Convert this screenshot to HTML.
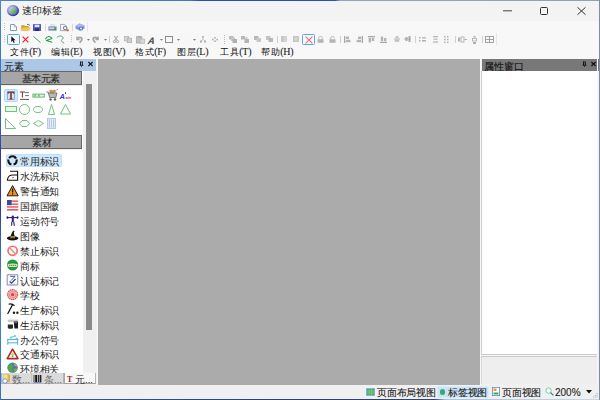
<!DOCTYPE html>
<html><head><meta charset="utf-8">
<style>
*{box-sizing:border-box;margin:0;padding:0}
html,body{width:600px;height:400px;overflow:hidden;background:#f0f0f0;font-family:"Liberation Sans",sans-serif;color:#000}
.a{position:absolute}
.t{position:absolute;white-space:nowrap;line-height:1}
.mn{font-size:9px;letter-spacing:0.6px;color:#111}
.mn .lt{font-family:"Liberation Serif",serif;font-weight:normal;font-size:10px;letter-spacing:-0.2px;color:#222;-webkit-text-stroke:0.1px #222}
.li{position:absolute;left:20px;font-size:9.5px;line-height:1;white-space:nowrap;color:#1a1a1a;letter-spacing:-0.2px;color:#222}
.sk{-webkit-text-stroke:0.1px currentColor}
svg{position:absolute;overflow:visible}
</style></head><body>
<!-- window border -->
<div class="a" style="left:0;top:0;width:600px;height:1px;background:linear-gradient(90deg,#4a86bd 0,#3b7cc0 190px,#2350c4 200px,#2a4cc0 335px,#93a6b6 340px,#8fa2b2 600px)"></div>


<!-- title bar -->
<div class="a" style="left:1px;top:1px;width:598px;height:20px;background:#f3f3f3"></div>
<svg style="left:7px;top:5px" width="12" height="12" viewBox="0 0 12 12">
<defs><radialGradient id="gb" cx="0.4" cy="0.4" r="0.6"><stop offset="0" stop-color="#e8ecf8"/><stop offset="0.6" stop-color="#8a90d8"/><stop offset="1" stop-color="#2a2ea0"/></radialGradient>
<linearGradient id="gg" x1="0" y1="0" x2="1" y2="1"><stop offset="0" stop-color="#c8d8c8"/><stop offset="1" stop-color="#3a9a4a"/></linearGradient></defs>
<ellipse cx="6" cy="5.6" rx="6" ry="5.6" fill="url(#gb)"/>
<rect x="3" y="2.2" width="6" height="6.6" rx="1" fill="url(#gg)"/>
</svg>
<div class="t" style="left:22px;top:6px;font-size:9.5px;color:#1a1a1a;letter-spacing:0px">速印标签</div>
<!-- window buttons -->
<svg style="left:503px;top:9px" width="9" height="4" viewBox="0 0 9 4"><path d="M0 1.8H9" stroke="#444" stroke-width="1"/></svg>
<div class="a" style="left:540px;top:7px;width:8px;height:8px;border:1px solid #333;border-radius:1.5px"></div>
<svg style="left:577px;top:7px" width="9" height="8" viewBox="0 0 9 8"><path d="M0.5 0.3L8.5 7.7M8.5 0.3L0.5 7.7" stroke="#333" stroke-width="1"/></svg>

<!-- toolbars -->
<div class="a" style="left:1px;top:21px;width:598px;height:38px;background:#f8f8f8"></div>
<div class="a" style="left:2px;top:22px;width:86px;height:10px;background:#f7f7f7;border-right:1px solid #e6e6e6"></div>
<div class="a" style="left:2px;top:33px;width:495px;height:12px;background:#f7f7f7;border-right:1px solid #e6e6e6"></div>
<!-- grips -->
<svg style="left:4px;top:23px" width="2" height="8"><rect x="0" y="0" width="1" height="1" fill="#c0c0c0"/><rect x="0" y="2" width="1" height="1" fill="#c0c0c0"/><rect x="0" y="4" width="1" height="1" fill="#c0c0c0"/><rect x="0" y="6" width="1" height="1" fill="#c0c0c0"/></svg>
<svg style="left:4px;top:35px" width="2" height="8"><rect x="0" y="0" width="1" height="1" fill="#c0c0c0"/><rect x="0" y="2" width="1" height="1" fill="#c0c0c0"/><rect x="0" y="4" width="1" height="1" fill="#c0c0c0"/><rect x="0" y="6" width="1" height="1" fill="#c0c0c0"/></svg>
<!-- row1 icons -->
<svg style="left:10px;top:24px" width="7" height="7" viewBox="0 0 7 7"><path d="M0.5 0.5H4.2L6.5 2.8V6.5H0.5Z" fill="#fbfcff" stroke="#7d8fb0" stroke-width="0.9"/><path d="M4.2 0.5V2.8H6.5" fill="#d8e0ee" stroke="#7d8fb0" stroke-width="0.6"/></svg>
<svg style="left:21px;top:24px" width="10" height="7" viewBox="0 0 10 7"><path d="M0.3 1.2H3.2L4 2H7.6V6.6H0.3Z" fill="#c99a2e"/><path d="M1.6 3.2H9.6L8.2 6.8H0.3Z" fill="#f3c54a"/><path d="M6 0.6Q8 -0.2 9 1.6" stroke="#3a66b8" stroke-width="0.9" fill="none"/></svg>
<svg style="left:33px;top:24px" width="8" height="7" viewBox="0 0 8 7"><rect x="0" y="0" width="8" height="7" rx="0.6" fill="#4a52c8"/><rect x="1.6" y="0.6" width="4.8" height="2.6" fill="#dfe3ff"/><rect x="2" y="4.4" width="4" height="2.6" fill="#2a2e70"/></svg>
<div class="a" style="left:45px;top:24px;width:1px;height:7px;background:#d8d8d8"></div>
<svg style="left:48px;top:24px" width="9" height="7" viewBox="0 0 9 7"><path d="M2 0H7V2.5H2Z" fill="#dde4ee"/><path d="M0.4 2.4H8.6V6.6H0.4Z" fill="#7b8aa6"/><rect x="1.2" y="3.4" width="5" height="1.6" fill="#c8d2e2"/><rect x="6.2" y="4.6" width="1.8" height="1.6" fill="#22b04a"/></svg>
<svg style="left:60px;top:24px" width="9" height="7" viewBox="0 0 9 7"><path d="M0.5 0.4H4.6L6 1.8V6.6H0.5Z" fill="#f4f6fb" stroke="#8a98b4" stroke-width="0.8"/><circle cx="5.2" cy="4" r="1.8" fill="#eaf0fa" stroke="#50607e" stroke-width="0.8"/><circle cx="7.6" cy="6.2" r="1.2" fill="#d08020"/></svg>
<div class="a" style="left:72px;top:24px;width:1px;height:7px;background:#d8d8d8"></div>
<svg style="left:75px;top:23px" width="10" height="8" viewBox="0 0 10 8"><path d="M0.5 3L4.5 0.5L9.5 2.5V5.5L5 7.8L0.5 5.5Z" fill="#8c90d8"/><path d="M0.5 3L4.5 0.5L9.5 2.5L5 4.8Z" fill="#b0b4ec"/><circle cx="6" cy="5.6" r="2" fill="#3a78d8"/><circle cx="6" cy="5.6" r="1" fill="#f0f4ff"/></svg>
<!-- row2 -->
<div class="a" style="left:7px;top:34px;width:13px;height:11px;background:#f2f8fe;border:1px solid #5ea4ec;border-radius:1.5px"></div>
<svg style="left:11px;top:36px" width="5" height="7" viewBox="0 0 5 7"><path d="M0.3 0.2V6L1.6 4.7L2.8 6.9L3.7 6.4L2.6 4.3H4.6Z" fill="#111"/></svg>
<svg style="left:22px;top:36px" width="7" height="7" viewBox="0 0 7 7"><path d="M0.6 0.6L6.4 6.4M6.4 0.6L0.6 6.4" stroke="#f01c24" stroke-width="1.2"/></svg>
<svg style="left:33px;top:36px" width="8" height="7" viewBox="0 0 8 7"><path d="M0.5 0.5L7.5 6.5" stroke="#3c9a56" stroke-width="0.9"/></svg>
<svg style="left:45px;top:35px" width="8" height="8" viewBox="0 0 8 8"><path d="M0.6 3.8Q3.4 -0.6 7 3.4L1.3 5.4L7 7.2" stroke="#2e9a46" stroke-width="1.1" fill="none" stroke-linejoin="round" stroke-linecap="round"/></svg>
<svg style="left:56px;top:35px" width="9" height="9" viewBox="0 0 9 9"><path d="M1.2 2.2Q4.3 -0.6 7.3 2.6Q7.4 3.8 5.2 5.3Q5.4 6.8 7.8 8" stroke="#5aaa7a" stroke-width="1" fill="none" stroke-linecap="round"/></svg>
<svg style="left:71px;top:35px" width="2" height="8"><rect x="0" y="0" width="1" height="1" fill="#c0c0c0"/><rect x="0" y="2" width="1" height="1" fill="#c0c0c0"/><rect x="0" y="4" width="1" height="1" fill="#c0c0c0"/><rect x="0" y="6" width="1" height="1" fill="#c0c0c0"/></svg>
<svg style="left:75.5px;top:36px" width="7" height="7" viewBox="0 0 7 7"><path d="M1 0.5V3.6H3.6" stroke="#a4a4a4" stroke-width="1.5" fill="none"/><path d="M1.2 3.4Q3.2 0.4 5.6 2Q6.6 4 3.6 6.6" stroke="#a4a4a4" stroke-width="1.7" fill="none"/></svg>
<svg style="left:86.5px;top:39px" width="3" height="2" viewBox="0 0 3 2"><path d="M0 0H3L1.5 1.8Z" fill="#777"/></svg>
<svg style="left:91.5px;top:36px" width="7" height="7" viewBox="0 0 7 7"><path d="M6 0.5V3.6H3.4" stroke="#a4a4a4" stroke-width="1.5" fill="none"/><path d="M5.8 3.4Q3.8 0.4 1.4 2Q0.4 4 3.4 6.6" stroke="#a4a4a4" stroke-width="1.7" fill="none"/></svg>
<svg style="left:103.5px;top:39px" width="3" height="2" viewBox="0 0 3 2"><path d="M0 0H3L1.5 1.8Z" fill="#777"/></svg>
<div class="a" style="left:109px;top:36px;width:1px;height:7px;background:#d0d0d0"></div>
<svg style="left:113px;top:36px" width="6" height="7" viewBox="0 0 6 7"><path d="M1.2 0L4.2 4.4M4.8 0L1.8 4.4" stroke="#b0b0b0" stroke-width="1.2"/><circle cx="1.4" cy="5.6" r="1.1" stroke="#a8a8a8" stroke-width="1" fill="none"/><circle cx="4.6" cy="5.6" r="1.1" stroke="#a8a8a8" stroke-width="1" fill="none"/></svg>
<svg style="left:124px;top:36px" width="8" height="7" viewBox="0 0 8 7"><rect x="0.5" y="0.5" width="4.2" height="4.4" fill="#d8d8d8" stroke="#b4b4b4" stroke-width="0.8"/><rect x="3.2" y="2.2" width="4.3" height="4.4" fill="#d0d0d0" stroke="#adadad" stroke-width="0.8"/></svg>
<svg style="left:136px;top:35.5px" width="9" height="7.5" viewBox="0 0 9 7.5"><rect x="0.5" y="0.8" width="5.4" height="6.2" fill="#c4c4c4" stroke="#a8a8a8" stroke-width="0.8"/><rect x="1.8" y="0.2" width="2.8" height="1.2" fill="#a0a0a0"/><rect x="4" y="3" width="4.6" height="4.2" fill="#d8d8d8" stroke="#b0b0b0" stroke-width="0.7"/></svg>
<div class="t" style="left:147.5px;top:36px;font-size:9.5px;font-weight:bold;font-style:italic;color:#4a4a4a;transform:skewX(-8deg)">A</div>
<svg style="left:159.5px;top:39px" width="3" height="2" viewBox="0 0 3 2"><path d="M0 0H3L1.5 1.8Z" fill="#777"/></svg>
<div class="a" style="left:165px;top:36px;width:8px;height:7px;border:1px solid #8c8c8c"></div>
<svg style="left:176.5px;top:39px" width="3" height="2" viewBox="0 0 3 2"><path d="M0 0H3L1.5 1.8Z" fill="#777"/></svg>
<svg style="left:192.5px;top:39px" width="3" height="2" viewBox="0 0 3 2"><path d="M0 0H3L1.5 1.8Z" fill="#777"/></svg>
<svg style="left:200px;top:36px" width="6" height="7" viewBox="0 0 6 7"><rect x="2.2" y="0" width="1.6" height="1.8" fill="#aaa"/><path d="M3 1.8V3.4M1 5L3 3.4L5 5" stroke="#b4b4b4" stroke-width="0.7" fill="none"/><rect x="0" y="4.6" width="1.8" height="2" fill="#aaa"/><rect x="4.2" y="4.6" width="1.8" height="2" fill="#aaa"/></svg>
<svg style="left:212px;top:37px" width="6" height="5" viewBox="0 0 6 5"><rect x="2.2" y="0" width="1.6" height="1.6" fill="#b0b0b0"/><rect x="0" y="1.8" width="1.6" height="1.6" fill="#b0b0b0"/><rect x="4.4" y="1.8" width="1.6" height="1.6" fill="#b0b0b0"/><rect x="2.2" y="3.4" width="1.6" height="1.6" fill="#b0b0b0"/></svg>
<svg style="left:223.5px;top:35px" width="2" height="9"><rect x="0" y="0" width="1" height="1" fill="#b8b8b8"/><rect x="0" y="2" width="1" height="1" fill="#b8b8b8"/><rect x="0" y="4" width="1" height="1" fill="#b8b8b8"/><rect x="0" y="6" width="1" height="1" fill="#b8b8b8"/><rect x="0" y="8" width="1" height="1" fill="#b8b8b8"/></svg>
<svg style="left:229px;top:36px" width="8" height="7" viewBox="0 0 8 7"><rect x="0" y="0" width="4.5" height="3.5" fill="#bcbcbc"/><rect x="2" y="1.5" width="4" height="3.5" fill="#c6c6c6"/><rect x="3.5" y="3" width="4.5" height="4" fill="#b0b0b0"/></svg>
<svg style="left:241px;top:36px" width="8" height="7" viewBox="0 0 8 7"><rect x="0" y="0" width="4" height="3.5" fill="#b8b8b8"/><rect x="4.5" y="1" width="2" height="2" fill="#cacaca"/><rect x="3.5" y="3" width="4.5" height="4" fill="#b4b4b4"/></svg>
<svg style="left:254px;top:36px" width="7" height="6" viewBox="0 0 7 6"><rect x="0" y="0" width="4.5" height="4" fill="#b8b8b8"/><rect x="2.5" y="2" width="4.5" height="4" fill="#c8c8c8"/></svg>
<svg style="left:266px;top:36px" width="7" height="6" viewBox="0 0 7 6"><rect x="0" y="0" width="4.5" height="4" fill="#c4c4c4"/><rect x="2.5" y="2" width="4.5" height="4" fill="#b8b8b8"/></svg>
<div class="a" style="left:277px;top:36px;width:1px;height:7px;background:#cfcfcf"></div>
<svg style="left:281px;top:36px" width="6" height="6"><rect x="0" y="0" width="6" height="6" fill="#c8c8c8"/><rect x="3" y="0" width="3" height="6" fill="#d4d4d4"/></svg>
<svg style="left:293px;top:36px" width="6" height="6"><rect x="0" y="0" width="6" height="6" fill="#c4c4c4"/><rect x="1.5" y="1.5" width="3" height="3" fill="#d8d8d8"/></svg>
<div class="a" style="left:302px;top:34px;width:13px;height:11px;background:#f2f8fe;border:1px solid #5ea4ec;border-radius:1.5px"></div>
<svg style="left:304.5px;top:35.5px" width="8" height="8" viewBox="0 0 8 8"><path d="M0.6 0.6L7.4 7.4M7.4 0.6L0.6 7.4" stroke="#f06a7a" stroke-width="1.1"/></svg>
<svg style="left:317px;top:35.5px" width="7" height="7" viewBox="0 0 7 7"><path d="M1.6 3.4V2.2Q1.6 0.5 3.5 0.5Q5.4 0.5 5.4 2.2V3.4" stroke="#bcbcbc" stroke-width="1" fill="none"/><rect x="0.5" y="3.2" width="6" height="3.6" fill="#b4b4b4"/></svg>
<svg style="left:329px;top:35.5px" width="7" height="7" viewBox="0 0 7 7"><path d="M1.6 3.4V2.2Q1.6 0.5 3.5 0.5Q5.4 0.5 5.4 2.2" stroke="#bcbcbc" stroke-width="1" fill="none"/><rect x="0.5" y="3.2" width="6" height="3.6" fill="#b4b4b4"/></svg>
<div class="a" style="left:340px;top:36px;width:1px;height:7px;background:#cfcfcf"></div>
<svg style="left:344px;top:36px" width="7" height="7" viewBox="0 0 7 7"><rect x="0" y="0" width="1.2" height="7" fill="#a8a8a8"/><rect x="1.8" y="0.6" width="3.2" height="2.4" fill="#b4b4b4"/><rect x="1.8" y="3.8" width="4.6" height="2.4" fill="#b4b4b4"/></svg>
<svg style="left:356px;top:36px" width="7" height="7" viewBox="0 0 7 7"><rect x="5.8" y="0" width="1.2" height="7" fill="#a8a8a8"/><rect x="2" y="0.6" width="3.2" height="2.4" fill="#b4b4b4"/><rect x="0.6" y="3.8" width="4.6" height="2.4" fill="#b4b4b4"/></svg>
<svg style="left:368px;top:36px" width="7" height="7" viewBox="0 0 7 7"><rect x="0" y="0" width="7" height="1.2" fill="#a8a8a8"/><rect x="0.6" y="1.8" width="2.4" height="4.6" fill="#b4b4b4"/><rect x="3.8" y="1.8" width="2.4" height="3.2" fill="#b4b4b4"/></svg>
<svg style="left:380px;top:36px" width="7" height="7" viewBox="0 0 7 7"><rect x="0" y="5.8" width="7" height="1.2" fill="#a8a8a8"/><rect x="0.8" y="0.6" width="2.4" height="4.6" fill="#b4b4b4"/><rect x="4" y="2" width="2.4" height="3.2" fill="#b4b4b4"/></svg>
<svg style="left:394px;top:36px" width="6" height="6" viewBox="0 0 6 6"><rect x="0" y="2.6" width="6" height="0.9" fill="#aaa"/><rect x="1.5" y="0.3" width="3" height="2" fill="#c0c0c0"/><rect x="0.8" y="3.8" width="4.4" height="2" fill="#c0c0c0"/></svg>
<svg style="left:404px;top:36px" width="7" height="6" viewBox="0 0 7 6"><rect x="0" y="2.5" width="7" height="1" fill="#b4b4b4"/><rect x="1.5" y="1" width="2" height="4" fill="#aaa"/><rect x="4.5" y="0" width="2" height="6" fill="#aaa"/></svg>
<div class="a" style="left:415px;top:36px;width:1px;height:7px;background:#cfcfcf"></div>
<svg style="left:419px;top:37px" width="7" height="5" viewBox="0 0 7 5"><rect x="0" y="0" width="1.5" height="1.5" fill="#b0b0b0"/><rect x="3" y="0" width="4" height="1.5" fill="#c0c0c0"/><rect x="0" y="3" width="1.5" height="1.5" fill="#b0b0b0"/><rect x="3" y="3" width="4" height="1.5" fill="#b0b0b0"/></svg>
<svg style="left:433px;top:36px" width="5" height="7" viewBox="0 0 5 7"><rect x="0" y="0" width="5" height="1.3" fill="#b8b8b8"/><rect x="0.5" y="2.5" width="4" height="1.5" fill="#c4c4c4"/><rect x="0" y="5.4" width="5" height="1.3" fill="#b8b8b8"/></svg>
<svg style="left:444px;top:36px" width="5" height="7" viewBox="0 0 5 7"><rect x="0" y="0" width="1.5" height="1.5" fill="#b4b4b4"/><rect x="3" y="0" width="1.5" height="1.5" fill="#b4b4b4"/><rect x="0" y="2.8" width="1.5" height="1.5" fill="#b4b4b4"/><rect x="3" y="2.8" width="1.5" height="1.5" fill="#b4b4b4"/><rect x="0" y="5.5" width="1.5" height="1.5" fill="#b4b4b4"/><rect x="3" y="5.5" width="1.5" height="1.5" fill="#b4b4b4"/></svg>
<div class="a" style="left:455px;top:36px;width:1px;height:7px;background:#cfcfcf"></div>
<svg style="left:458px;top:37px" width="9" height="5" viewBox="0 0 9 5"><rect x="0" y="0.5" width="2" height="4" fill="#b0b0b0"/><rect x="3" y="0" width="3" height="5" fill="none" stroke="#aaa" stroke-width="0.8"/><rect x="6.5" y="2" width="2.5" height="1" fill="#b0b0b0"/></svg>
<svg style="left:472px;top:36px" width="5" height="8" viewBox="0 0 5 8"><rect x="1.5" y="0" width="2" height="1.5" fill="#b0b0b0"/><rect x="0.5" y="2.5" width="4" height="2.5" fill="none" stroke="#aaa" stroke-width="0.8"/><rect x="1" y="6" width="3" height="2" fill="#b0b0b0"/></svg>
<div class="a" style="left:482px;top:36px;width:1px;height:7px;background:#cfcfcf"></div>
<svg style="left:485px;top:36px" width="9" height="7" viewBox="0 0 9 7"><rect x="0.5" y="0.5" width="8" height="6" fill="none" stroke="#959595" stroke-width="0.85"/><path d="M4.5 0.5V6.5M0.5 3.5H8.5" stroke="#959595" stroke-width="0.85"/></svg>
<!-- menu -->
<div class="t mn" style="left:10px;top:47px">文件<span class="lt">(F)</span></div>
<div class="t mn" style="left:51px;top:47px">编辑<span class="lt">(E)</span></div>
<div class="t mn" style="left:93px;top:47px">视图<span class="lt">(V)</span></div>
<div class="t mn" style="left:135px;top:47px">格式<span class="lt">(F)</span></div>
<div class="t mn" style="left:177px;top:47px">图层<span class="lt">(L)</span></div>
<div class="t mn" style="left:220px;top:47px">工具<span class="lt">(T)</span></div>
<div class="t mn" style="left:261px;top:47px">帮助<span class="lt">(H)</span></div>
<!-- center gray -->
<div class="a" style="left:98px;top:59px;width:382px;height:326px;background:#ababab"></div>

<!-- left panel -->
<div class="a" style="left:1px;top:59px;width:97px;height:326px;background:#f0f0f0"></div>
<div class="a" style="left:1px;top:59px;width:95px;height:12px;background:#adc8e6"></div>
<div class="t sk" style="left:4px;top:62px;font-size:9.5px;color:#222">元素</div>
<svg style="left:79px;top:61px" width="5" height="6" viewBox="0 0 5 6"><rect x="1" y="0.6" width="1" height="3.6" fill="#1a1a1a"/><rect x="2.8" y="0.6" width="1" height="3.6" fill="#1a1a1a"/><rect x="1" y="0.6" width="2.8" height="0.8" fill="#333"/><rect x="0.6" y="3.8" width="3.8" height="0.9" fill="#1a1a1a"/><rect x="2" y="4.6" width="0.9" height="1.3" fill="#333"/></svg>
<svg style="left:88px;top:62px" width="5" height="4" viewBox="0 0 5 4"><path d="M0.4 0L4.6 4M4.6 0L0.4 4" stroke="#1a1a1a" stroke-width="1.2"/></svg>
<div class="a" style="left:1px;top:71px;width:82px;height:302px;background:#fff"></div>
<div class="a" style="left:1px;top:71px;width:81px;height:14px;background:#a6a6a6;border:1px solid #666;border-left:none"></div><div class="a" style="left:1px;top:85px;width:82px;height:1px;background:#ececec"></div>
<div class="t sk" style="left:22px;top:74px;font-size:9.5px;letter-spacing:-0.6px;color:#1e1e1e">基本元素</div>
<div class="a" style="left:1px;top:135px;width:81px;height:14px;background:#a6a6a6;border:1px solid #666;border-left:none"></div><div class="a" style="left:1px;top:149px;width:82px;height:1px;background:#ececec"></div>
<div class="t sk" style="left:32px;top:138px;font-size:9.5px;color:#1e1e1e">素材</div>
<!-- element grid -->
<div class="a" style="left:4px;top:89px;width:14px;height:13px;background:#d4eafc;border:1px solid #b0d8fa;border-radius:2px"></div>
<svg style="left:7px;top:91px" width="8" height="9" viewBox="0 0 8 9"><rect x="0.5" y="0.5" width="7" height="8" fill="#cfe6f8" stroke="#8a98ac" stroke-width="0.8"/><path d="M1.2 1.2H6.8V2.8M1.2 1.2V2.8" stroke="#7a2222" stroke-width="1.1" fill="none"/><path d="M4 1.2V8" stroke="#7a2222" stroke-width="1.5"/><path d="M2.6 8H5.4" stroke="#7a2222" stroke-width="0.9"/></svg>
<svg style="left:19px;top:91px" width="11" height="10" viewBox="0 0 11 10"><path d="M0.8 1H6" stroke="#8a2a2a" stroke-width="1"/><path d="M3.4 1V6.6" stroke="#8a2a2a" stroke-width="1"/><path d="M6 1.6H10M6 4.6H10" stroke="#666" stroke-width="0.9"/><path d="M1 8.4H10" stroke="#555" stroke-width="1"/></svg>
<svg style="left:32px;top:93px" width="13" height="5" viewBox="0 0 13 5"><rect x="0.9" y="1.1" width="11.4" height="3" fill="#e4f4e4" stroke="#52b462" stroke-width="0.9"/><rect x="2.4" y="1.6" width="1.4" height="2" fill="#52b462"/><rect x="6.2" y="1.6" width="1.4" height="2" fill="#52b462"/></svg>
<svg style="left:46px;top:89px" width="12" height="12" viewBox="0 0 12 12"><path d="M3 1.5Q5 0 7 1.2L9 0.5L10 2.5L8 4H4Z" fill="#c89850"/><path d="M0.5 3H2.2L3.6 8.5H9.8L11 4H2.6" fill="#b8b8b8" stroke="#707070" stroke-width="0.9"/><circle cx="4.6" cy="10.4" r="1.2" fill="#555"/><circle cx="9" cy="10.4" r="1.2" fill="#555"/><path d="M9.5 1.5L11.8 0.3" stroke="#888" stroke-width="0.7"/></svg>
<div class="t" style="left:59.5px;top:93px;font-family:'Liberation Sans',sans-serif;font-weight:bold;font-style:italic;font-size:7.5px;color:#2a3ae0">A</div><div class="a" style="left:64.5px;top:92px;width:1.5px;height:1.5px;background:#444;border-radius:1px"></div>
<div class="t" style="left:65.5px;top:95.5px;font-family:'Liberation Sans',sans-serif;font-weight:bold;font-size:4px;color:#c83040">ain</div>
<svg style="left:5px;top:106px" width="12" height="6" viewBox="0 0 12 6"><rect x="0.5" y="0.5" width="11" height="5" fill="#e8f6e8" stroke="#5ab66a" stroke-width="0.85"/></svg>
<svg style="left:19px;top:104px" width="11" height="11" viewBox="0 0 11 11"><circle cx="5.5" cy="5.5" r="5" fill="none" stroke="#5ab66a" stroke-width="0.85"/></svg>
<svg style="left:33px;top:106px" width="10" height="7" viewBox="0 0 10 7"><ellipse cx="5" cy="3.5" rx="4.5" ry="3" fill="none" stroke="#5ab66a" stroke-width="0.85"/></svg>
<svg style="left:48px;top:104px" width="7" height="11" viewBox="0 0 7 11"><path d="M3.5 0.5L6.5 10.5H0.5Z" fill="none" stroke="#5ab66a" stroke-width="0.85"/></svg>
<svg style="left:60px;top:104px" width="11" height="11" viewBox="0 0 11 11"><path d="M5.5 0.5L10.5 10H0.5Z" fill="none" stroke="#5ab66a" stroke-width="0.85"/></svg>
<svg style="left:5px;top:118px" width="11" height="11" viewBox="0 0 11 11"><path d="M0.5 0.5L10.5 10.5H0.5Z" fill="none" stroke="#5ab66a" stroke-width="0.85"/></svg>
<svg style="left:19px;top:120px" width="11" height="7" viewBox="0 0 11 7"><path d="M0.5 3.5L3 0.5H8L10.5 3.5L8 6.5H3Z" fill="none" stroke="#5ab66a" stroke-width="0.85"/></svg>
<svg style="left:33px;top:120px" width="11" height="7" viewBox="0 0 11 7"><path d="M0.5 3.5L5.5 0.5L10.5 3.5L5.5 6.5Z" fill="none" stroke="#5ab66a" stroke-width="0.85"/></svg>
<svg style="left:47px;top:118px" width="9" height="11" viewBox="0 0 9 11"><rect x="0.5" y="0.5" width="8" height="10" fill="#dce8f8" stroke="#a8c8f4" stroke-width="0.9"/><path d="M2.5 1.5V9.5M4.5 1.5V9.5M6.5 1.5V9.5" stroke="#a8b4c8" stroke-width="0.7"/><path d="M3.5 1.5V9.5M5.5 1.5V9.5" stroke="#f4f8ff" stroke-width="0.6"/></svg>
<!-- list -->
<div class="a" style="left:6px;top:154px;width:56px;height:13px;background:#cde8fc;border:1px solid #c0e0fa;border-radius:1.5px"></div>
<div class="li" style="top:157px">常用标识</div>
<div class="li" style="top:172px">水洗标识</div>
<div class="li" style="top:187px">警告通知</div>
<div class="li" style="top:202px">国旗国徽</div>
<div class="li" style="top:217px">运动符号</div>
<div class="li" style="top:232px">图像</div>
<div class="li" style="top:247px">禁止标识</div>
<div class="li" style="top:262px">商标</div>
<div class="li" style="top:277px">认证标记</div>
<div class="li" style="top:291px">学校</div>
<div class="li" style="top:306px">生产标识</div>
<div class="li" style="top:321px">生活标识</div>
<div class="li" style="top:336px">办公符号</div>
<div class="li" style="top:350px">交通标识</div>
<div class="li" style="top:365px">环境相关</div>
<!-- list icons -->
<svg style="left:6px;top:155px" width="13" height="12" viewBox="0 0 13 12"><path d="M3.06 3.09A4.2 4.2 0 0 1 9.94 3.09M10.56 4.41A4.2 4.2 0 0 1 7.59 9.56M5.41 9.56A4.2 4.2 0 0 1 2.44 4.41" stroke="#111" stroke-width="2.1" fill="none"/><path d="M9 1.4L11 3.6L8.4 3.8Z" fill="#111"/></svg>
<svg style="left:6px;top:170px" width="13" height="12" viewBox="0 0 13 12"><path d="M4 1.3H11.6V10.2H1.4Q1.8 5.4 6 5H11.6" stroke="#111" stroke-width="1.1" fill="none"/><circle cx="7" cy="7.6" r="0.7" fill="#333"/></svg>
<svg style="left:6px;top:185px" width="13" height="12" viewBox="0 0 13 12"><path d="M6.6 0.6L12.2 10.8H1Z" fill="#f09020" stroke="#1a1a1a" stroke-width="1" stroke-linejoin="round"/><path d="M6.6 3.6V7.6" stroke="#111" stroke-width="1.2"/><rect x="6" y="8.4" width="1.2" height="1.2" fill="#111"/></svg>
<svg style="left:7px;top:200px" width="12" height="11" viewBox="0 0 12 11"><rect x="0" y="0" width="11.3" height="10.6" fill="#fff"/><rect x="0" y="0.4" width="11.3" height="1.5" fill="#e45a64"/><rect x="0" y="3.4" width="11.3" height="1.5" fill="#e45a64"/><rect x="0" y="6.2" width="11.3" height="1.5" fill="#e45a64"/><rect x="0" y="9" width="11.3" height="1.6" fill="#e45a64"/><rect x="0" y="0" width="4.6" height="5.2" fill="#38489a"/><rect x="0" y="10.2" width="11.3" height="0.5" fill="#b0b0b0"/></svg>
<svg style="left:6px;top:215px" width="13" height="11" viewBox="0 0 13 11"><path d="M1.2 2.6H11.8" stroke="#2a1e82" stroke-width="1.1"/><ellipse cx="1.4" cy="2.6" rx="0.9" ry="1.4" fill="#2a1e82"/><ellipse cx="11.6" cy="2.6" rx="0.9" ry="1.4" fill="#2a1e82"/><rect x="5.8" y="0.4" width="2" height="6.6" rx="0.8" fill="#2a1e82"/><path d="M5.9 6.6L5.6 10.8M7.7 6.6L8.4 10.8" stroke="#2a1e82" stroke-width="1.1"/></svg>
<svg style="left:6px;top:230px" width="13" height="11" viewBox="0 0 13 11"><path d="M7.4 0.6Q6 2 5.6 3.4Q4.8 5.2 4.2 6.8H9.2Q8.2 5 8 3.4Q7.6 2.4 8.6 1.6Z" fill="#1a1a1a"/><ellipse cx="6.6" cy="8.2" rx="5.8" ry="2.2" fill="#111"/><rect x="4.4" y="6.2" width="4.6" height="1.4" fill="#d8a020"/><rect x="4.6" y="7.6" width="1" height="0.8" fill="#f0c040"/><rect x="7.6" y="7.6" width="1" height="0.8" fill="#f0c040"/></svg>
<svg style="left:6px;top:245px" width="13" height="12" viewBox="0 0 13 12"><circle cx="6.6" cy="5.8" r="4.6" fill="#fff" stroke="#f06a6a" stroke-width="1.6"/><path d="M3.4 2.6L9.8 9" stroke="#f48a8a" stroke-width="1.6"/></svg>
<svg style="left:6px;top:259px" width="13" height="12" viewBox="0 0 13 12"><circle cx="6.6" cy="6" r="5.6" fill="#2a9438"/><path d="M1.6 5.2Q6.6 3.6 11.6 5.2L11.4 7.4Q6.6 8.8 1.8 7.4Z" fill="#d8ecd0"/><path d="M3 6.3H10.2" stroke="#2a9438" stroke-width="1" stroke-dasharray="1.4 0.5"/></svg>
<svg style="left:6px;top:274px" width="13" height="12" viewBox="0 0 13 12"><path d="M1.2 0.8H11.8V11H1.2Z" fill="#fff" stroke="#8088b8" stroke-width="1"/><path d="M4.2 2.4H9L5 6.6" stroke="#50589a" stroke-width="1" fill="none"/><path d="M3.6 7.4L5.4 9.2L9.6 5" stroke="#2a3a9a" stroke-width="1.2" fill="none"/><path d="M3.4 10H9" stroke="#a0a8d0" stroke-width="0.6"/></svg>
<svg style="left:6px;top:289px" width="13" height="12" viewBox="0 0 13 12"><circle cx="6.6" cy="5.6" r="5.4" fill="#f4b8b8"/><circle cx="6.6" cy="5.6" r="5" fill="none" stroke="#e04a4a" stroke-width="1.1" stroke-dasharray="1.3 0.7"/><circle cx="6.6" cy="5.6" r="3.2" fill="none" stroke="#ec6a6a" stroke-width="1" stroke-dasharray="1 0.6"/><circle cx="6.6" cy="5.6" r="1.6" fill="#e03a3a"/></svg>
<svg style="left:6px;top:303px" width="13" height="12" viewBox="0 0 13 12"><path d="M2.6 1.2Q5.6 0.2 8.6 2.6" stroke="#111" stroke-width="1.2" fill="none"/><path d="M6.6 1.6L1.6 11" stroke="#111" stroke-width="1.2"/><circle cx="8" cy="9.8" r="1.2" fill="#1a1a1a"/><circle cx="11.4" cy="9.8" r="1.2" fill="#1a1a1a"/></svg>
<svg style="left:6px;top:318px" width="13" height="12" viewBox="0 0 13 12"><rect x="1.8" y="1.6" width="10.4" height="2.6" fill="#c8c8c8"/><path d="M1.8 6.6H7V10.2Q4.4 11.2 1.8 10.2Z" fill="#2a2a2a"/><path d="M7.8 3.6H12V10.4H8.4Z" fill="#1a1a1a"/><rect x="8.4" y="4.2" width="3" height="1" fill="#777"/></svg>
<svg style="left:6px;top:334px" width="13" height="12" viewBox="0 0 13 12"><path d="M1 5.6H12.4M1.8 5.6V10.8M11.6 5.6V10.8M1.8 8.8H11.6" stroke="#48b4d0" stroke-width="1" fill="none"/><path d="M3.6 4.2L9.2 1.8M8 1L9.6 1.8L8.8 3.2M5 2.2V4.6" stroke="#50bcd8" stroke-width="0.9" fill="none"/><rect x="9.6" y="3.8" width="2" height="1.6" fill="#58c0d8"/></svg>
<svg style="left:6px;top:348px" width="13" height="12" viewBox="0 0 13 12"><path d="M6.6 1.2L12 10.6H1.2Z" fill="#fff" stroke="#b02828" stroke-width="1.6" stroke-linejoin="round"/><circle cx="6.6" cy="6.2" r="1.3" fill="#e8c838"/><rect x="5.9" y="7.4" width="1.4" height="1.6" fill="#38a040"/></svg>
<svg style="left:6px;top:362px" width="13" height="12" viewBox="0 0 13 12"><circle cx="6.6" cy="5.6" r="5.2" fill="#3a7ac8"/><path d="M2 4.2Q3.6 1.6 6.2 2.2Q8 3.4 6.6 5.6Q5.4 8 7.4 10.4Q2.4 10.4 1.6 6.4Z" fill="#4aac48"/><path d="M7.6 1.2Q10.6 1.8 11.6 4.6Q9.6 4.8 8.2 3.4Z" fill="#e0a030"/><path d="M8 6.4L11.6 6.8Q10.6 9.8 8.4 10.4Z" fill="#70b848"/><path d="M5 5.8L7 7.6L6 9" stroke="#c07020" stroke-width="0.9" fill="none"/></svg>
<!-- scrollbar -->
<div class="a" style="left:83px;top:71px;width:13px;height:302px;background:#f0f0f0"></div>
<div class="a" style="left:86px;top:84px;width:6px;height:246px;background:#8a8a8a"></div>
<div class="a" style="left:96px;top:59px;width:2px;height:326px;background:#f4f4f4"></div>
<!-- tabs -->
<div class="a" style="left:1px;top:373px;width:95px;height:12px;background:#f0f0f0"></div><div class="a" style="left:1px;top:373px;width:64px;height:1px;background:#a8a8a8"></div>
<div class="a" style="left:1px;top:373px;width:63px;height:11px;background:#dadada;border:1px solid #b4b4b4;border-top:none"></div>
<div class="a" style="left:31px;top:373px;width:1px;height:11px;background:#c4c4c4"></div>
<svg style="left:2px;top:374px" width="8" height="10" viewBox="0 0 8 10"><path d="M2 1L5.5 0.3L7.5 1.2V7.6L4 8.6L2 7.6Z" fill="#f0b828" stroke="#b08820" stroke-width="0.4"/><path d="M2 1L5.5 0.3V7.4L2 7.6Z" fill="#f8e088"/><circle cx="3" cy="7" r="2.3" fill="#f4f8ff" stroke="#5a8ad8" stroke-width="0.8"/></svg>
<div class="t" style="left:12px;top:375px;font-size:9.5px;color:#6a6a6a">数...</div>
<svg style="left:33px;top:375px" width="9" height="8" viewBox="0 0 9 8"><rect x="0.5" y="0" width="1" height="7" fill="#444"/><rect x="2.2" y="0" width="2" height="7" fill="#111"/><rect x="5" y="0" width="1" height="7" fill="#333"/><rect x="6.6" y="0" width="1.8" height="7" fill="#222"/><rect x="0.5" y="7" width="8" height="1" fill="#8080e0"/></svg>
<div class="t" style="left:44px;top:375px;font-size:9.5px;color:#6a6a6a">条...</div>
<div class="a" style="left:64px;top:373px;width:32px;height:11px;background:#f8f8f8;border-left:1px solid #a8a8a8;border-right:1px solid #b4b4b4;border-bottom:1px solid #a0a0a0"></div>
<div class="t" style="left:67px;top:376px;font-family:'Liberation Serif',serif;font-weight:bold;font-size:8px;color:#902828">T</div>
<div class="t" style="left:75px;top:375px;font-size:9.5px;color:#222">元...</div>
<!-- right panel -->
<div class="a" style="left:480px;top:59px;width:119px;height:326px;background:#f0f0f0"></div>
<div class="a" style="left:480px;top:59px;width:1px;height:326px;background:#f8f8f8"></div>
<div class="a" style="left:481px;top:71px;width:1px;height:286px;background:#cfcfcf"></div>
<div class="a" style="left:482px;top:59px;width:117px;height:12px;background:#787878"></div>
<div class="t sk" style="left:484px;top:62px;font-size:9.5px;color:#111">属性窗口</div>
<svg style="left:582px;top:61px" width="5" height="6" viewBox="0 0 5 6"><rect x="1" y="0.6" width="1" height="3.6" fill="#111"/><rect x="2.8" y="0.6" width="1" height="3.6" fill="#111"/><rect x="1" y="0.6" width="2.8" height="0.8" fill="#222"/><rect x="0.6" y="3.8" width="3.8" height="0.9" fill="#111"/><rect x="2" y="4.6" width="0.9" height="1.3" fill="#222"/></svg>
<svg style="left:591px;top:62px" width="5" height="4" viewBox="0 0 5 4"><path d="M0.4 0L4.6 4M4.6 0L0.4 4" stroke="#111" stroke-width="1.2"/></svg>
<div class="a" style="left:482px;top:71px;width:116px;height:283px;background:#fff"></div>
<div class="a" style="left:481px;top:354px;width:117px;height:1px;background:#cacaca"></div>
<div class="a" style="left:481px;top:355px;width:117px;height:1px;background:#f8f8f8"></div>
<div class="a" style="left:481px;top:356px;width:117px;height:1px;background:#cacaca"></div>
<div class="a" style="left:481px;top:357px;width:117px;height:27px;background:#eeeeee"></div>
<div class="a" style="left:481px;top:357px;width:1px;height:27px;background:#d8d8d8"></div>
<div class="a" style="left:597px;top:59px;width:1px;height:325px;background:#f8f8f8"></div>
<!-- status bar -->
<div class="a" style="left:1px;top:385px;width:598px;height:14px;background:#f0f0f0"></div>
<svg style="left:366px;top:388px" width="9" height="8" viewBox="0 0 9 8"><rect x="0" y="0" width="9" height="8" rx="0.8" fill="#7ab4f0"/><rect x="1" y="1" width="7" height="6" fill="#48a848"/><path d="M3.3 1V7M5.7 1V7M1 3H8M1 5H8" stroke="#9ad89a" stroke-width="0.6"/></svg>
<div class="t sk" style="left:377px;top:388px;font-size:9.5px;letter-spacing:-0.25px;color:#1a1a1a">页面布局视图</div>
<div class="a" style="left:437px;top:386px;width:52px;height:12px;background:#cce4f7;border:1px solid #d8ecfa"></div>
<div class="a" style="left:440px;top:389px;width:5px;height:6px;border-radius:2.5px;background:#3aa870"></div>
<div class="t sk" style="left:448px;top:388px;font-size:9.5px;letter-spacing:-0.25px;color:#1a1a1a">标签视图</div>
<svg style="left:492px;top:387px" width="8" height="9" viewBox="0 0 8 9"><rect x="0.4" y="0.4" width="7.2" height="8.2" fill="#fff" stroke="#5a8ad0" stroke-width="0.8"/><rect x="1.5" y="1.5" width="3" height="2.5" fill="#f0a020"/><rect x="1.5" y="5.5" width="5" height="2" fill="#40a860"/></svg>
<div class="t sk" style="left:502px;top:388px;font-size:9.5px;letter-spacing:-0.25px;color:#1a1a1a">页面视图</div>
<svg style="left:545px;top:387px" width="9" height="9" viewBox="0 0 9 9"><circle cx="3.6" cy="3.6" r="2.7" fill="#f4fbf8" stroke="#70c8a0" stroke-width="0.9"/><path d="M5.6 5.6L8.4 8.4" stroke="#3a70c0" stroke-width="1.3"/></svg>
<div class="t sk" style="left:555px;top:388px;font-size:10px;color:#1a1a1a">200%</div>
<svg style="left:586px;top:390px" width="6" height="4" viewBox="0 0 6 4"><path d="M0 0H6L3 3.5Z" fill="#111"/></svg>
<svg style="left:593px;top:393px" width="5" height="5" viewBox="0 0 5 5"><rect x="3.5" y="0" width="1" height="1" fill="#aaa"/><rect x="1.8" y="1.8" width="1" height="1" fill="#aaa"/><rect x="3.5" y="1.8" width="1" height="1" fill="#aaa"/><rect x="0" y="3.5" width="1" height="1" fill="#aaa"/><rect x="1.8" y="3.5" width="1" height="1" fill="#aaa"/><rect x="3.5" y="3.5" width="1" height="1" fill="#aaa"/></svg>
<div class="a" style="left:0;top:399px;width:600px;height:1px;background:linear-gradient(90deg,#3a5a98 0,#2a3e80 300px,#30447a 435px,#a8c0dc 445px,#c8d6e6 600px)"></div>
<div class="a" style="left:599px;top:0;width:1px;height:400px;background:#7890a2"></div>
<div class="a" style="left:0;top:0;width:1px;height:400px;background:linear-gradient(180deg,#4a8ac0 0,#3a78c0 60px,#3a5ab8 130px,#2e34a0 160px,#3038a8 210px,#3a5cc0 240px,#4a70b8 270px,#6a98a8 290px,#4a80c0 310px,#3a70c0 400px)"></div>
</body></html>
